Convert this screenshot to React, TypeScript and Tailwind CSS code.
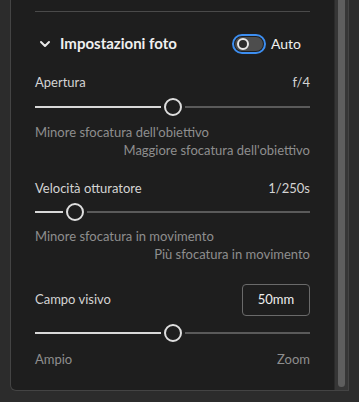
import React from "react";

function Slider({ pct }: { pct: number }) {
  return (
    <div className="relative h-[20px] w-full">
      <div
        className="absolute top-[9px] left-0 h-[2px] bg-[#d8d8d8]"
        style={{ width: `calc(${pct}% - 12px)` }}
      />
      <div
        className="absolute top-[9px] right-0 h-[2px] bg-[#5a5a5a]"
        style={{ left: `calc(${pct}% + 12px)` }}
      />
      <div
        className="absolute top-[1px] h-[18px] w-[18px] rounded-full border-2 border-[#dedede] bg-[#1e1e1e]"
        style={{ left: `calc(${pct}% - 9px)` }}
      />
    </div>
  );
}

export default function App() {
  return (
    <div
      className="w-[359px] h-[402px] bg-[#2c2c2c] px-[10px] overflow-hidden"
      style={{ fontFamily: 'Lato, sans-serif' }}
    >
      <div className="h-[391px] flex border-l border-r border-b border-[#444444] rounded-bl-[6px] bg-[#1e1e1e]">
        <div className="flex-1 flex flex-col px-6">
          <div className="h-[12px] border-b border-[#4a4a4a]" />
          <div className="h-[63px] flex items-center justify-between">
            <div className="flex items-center gap-[8px]">
              <svg width="14" height="14" viewBox="0 0 14 14" className="ml-[3px]">
                <path d="M3 5 L7 9 L11 5" stroke="#e8e8e8" strokeWidth="2" fill="none" strokeLinecap="round" strokeLinejoin="round" />
              </svg>
              <span className="text-[15px] font-bold text-[#f0f0f0]">Impostazioni foto</span>
            </div>
            <div className="flex items-center gap-[5px] mr-[9px]">
              <div className="w-[34px] h-[20px] rounded-full border-2 border-[#3d8ef0] p-[1px]">
                <div className="w-full h-full rounded-full bg-[#4d4d4d] flex items-center pl-[2px]">
                  <div className="w-[12px] h-[12px] rounded-full border-2 border-[#e6e6e6] bg-[#2a2a2a]" />
                </div>
              </div>
              <span className="text-[14px] text-[#f0f0f0]">Auto</span>
            </div>
          </div>
          <div className="h-[16px] flex items-center justify-between text-[13px] text-[#d4d4d4]">
            <span>Apertura</span>
            <span>f/4</span>
          </div>
          <div className="mt-[6px]">
            <Slider pct={50} />
          </div>
          <div className="mt-[6px] flex flex-col text-[13px] text-[#8e8e8e] leading-[18px]">
            <span>Minore sfocatura dell'obiettivo</span>
            <span className="self-end">Maggiore sfocatura dell'obiettivo</span>
          </div>
          <div className="mt-[22px] h-[16px] flex items-center justify-between text-[13px] text-[#d4d4d4]">
            <span>Velocità otturatore</span>
            <span>1/250s</span>
          </div>
          <div className="mt-[5px]">
            <Slider pct={14.5} />
          </div>
          <div className="mt-[5px] flex flex-col text-[13px] text-[#8e8e8e] leading-[18px]">
            <span>Minore sfocatura in movimento</span>
            <span className="self-end">Più sfocatura in movimento</span>
          </div>
          <div className="mt-[21px] h-[32px] flex items-center justify-between">
            <span className="text-[13px] text-[#d4d4d4]">Campo visivo</span>
            <div className="w-[68px] h-[32px] rounded-[4px] border border-[#6a6a6a] flex items-center justify-center text-[13px] text-[#f0f0f0]">
              50mm
            </div>
          </div>
          <div className="mt-[7px]">
            <Slider pct={50} />
          </div>
          <div className="mt-[7px] flex justify-between text-[13px] text-[#8e8e8e] leading-[18px]">
            <span>Ampio</span>
            <span>Zoom</span>
          </div>
        </div>
        <div className="w-[14px] bg-[#363636] border-l border-[#2a2a2a] pl-[3px] pr-[3px] pb-[3px]">
          <div className="w-[7px] h-full rounded-b-[4px] bg-[#5e5e5e]" />
        </div>
      </div>
    </div>
  );
}
